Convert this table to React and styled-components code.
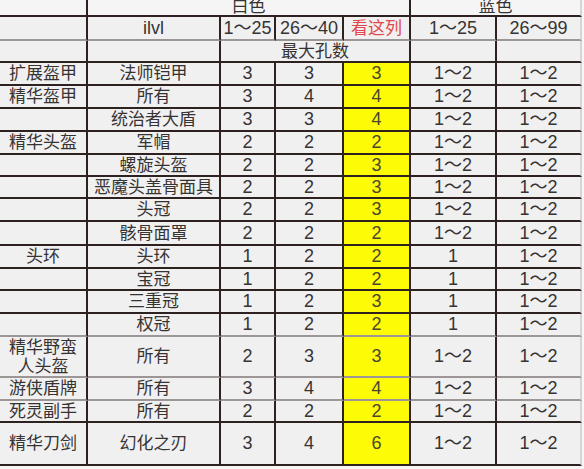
import React from 'react';
import styled, { createGlobalStyle } from 'styled-components';

const GlobalStyle = createGlobalStyle`
  body {
    margin: 0;
    background: #f7f6f6;
    font-family: "Liberation Sans", "Noto Sans CJK SC", sans-serif;
  }
`;

const LINE = '#2d2220';
const SOFT = '#9c9696';

const Sheet = styled.div`
  width: 584px;
  height: 469px;
  overflow: hidden;
  background: #f7f6f6;
`;

const Grid = styled.div`
  display: grid;
  grid-template-columns: 88px 133px 55px 68px 67px 86px 85px;
  grid-template-rows: 17px 24px 22px 23px 23px 23px 23px 22px 22px 23px 24px 23px 22px 23px 23px 41px 23px 22px 43px;
`;

const Cell = styled.div`
  grid-column: span ${(p) => p.$span || 1};
  box-sizing: border-box;
  display: flex;
  align-items: ${(p) => (p.$top ? 'flex-end' : 'center')};
  justify-content: center;
  text-align: center;
  white-space: pre-line;
  overflow: hidden;
  background: ${(p) => p.$bg || '#f1f0f0'};
  color: ${(p) => p.$color || '#363333'};
  font-size: ${(p) => (p.$num ? '18px' : '17px')};
  line-height: ${(p) => (p.$top ? '17px' : '19px')};
  border-right: 2px solid ${(p) => (p.$last ? '#d6d4d4' : LINE)};
  border-bottom: 2px solid ${(p) => (p.$soft ? SOFT : LINE)};
`;

const rows = [
  ['扩展盔甲', '法师铠甲', '3', '3', '3', '1～2', '1～2'],
  ['精华盔甲', '所有', '3', '4', '4', '1～2', '1～2'],
  ['', '统治者大盾', '3', '3', '4', '1～2', '1～2'],
  ['精华头盔', '军帽', '2', '2', '2', '1～2', '1～2'],
  ['', '螺旋头盔', '2', '2', '3', '1～2', '1～2'],
  ['', '恶魔头盖骨面具', '2', '2', '3', '1～2', '1～2'],
  ['', '头冠', '2', '2', '3', '1～2', '1～2'],
  ['', '骸骨面罩', '2', '2', '2', '1～2', '1～2'],
  ['头环', '头环', '1', '2', '2', '1', '1～2'],
  ['', '宝冠', '1', '2', '2', '1', '1～2'],
  ['', '三重冠', '1', '2', '3', '1', '1～2'],
  ['', '权冠', '1', '2', '2', '1', '1～2'],
  ['精华野蛮\n人头盔', '所有', '2', '3', '3', '1～2', '1～2'],
  ['游侠盾牌', '所有', '3', '4', '4', '1～2', '1～2'],
  ['死灵副手', '所有', '2', '2', '2', '1～2', '1～2'],
  ['精华刀剑', '幻化之刃', '3', '4', '6', '1～2', '1～2'],
];

// rows whose bottom line is the lighter grey one
const softRows = [11, 12, 13];

export default function App() {
  return (
    <Sheet>
      <GlobalStyle />
      <Grid>
        <Cell $bg="#f6f5f5" />
        <Cell $span={4} $top $bg="#f6f5f5">白色</Cell>
        <Cell $span={2} $top $last $bg="#f6f5f5">蓝色</Cell>

        <Cell $soft />
        <Cell $soft $num>ilvl</Cell>
        <Cell $soft $num>1～25</Cell>
        <Cell $soft $num>26～40</Cell>
        <Cell $soft $color="#e0484e">看这列</Cell>
        <Cell $soft $num>1～25</Cell>
        <Cell $soft $num $last>26～99</Cell>

        <Cell />
        <Cell />
        <Cell $span={3}>最大孔数</Cell>
        <Cell />
        <Cell $last />

        {rows.map((r, i) =>
          r.map((v, j) => (
            <Cell
              key={`${i}-${j}`}
              $num={j >= 2}
              $soft={softRows.includes(i)}
              $last={j === 6}
              $bg={j === 4 ? '#fdfb06' : undefined}
              $color={j === 4 ? '#4a4630' : undefined}
            >
              {v}
            </Cell>
          ))
        )}
      </Grid>
    </Sheet>
  );
}
